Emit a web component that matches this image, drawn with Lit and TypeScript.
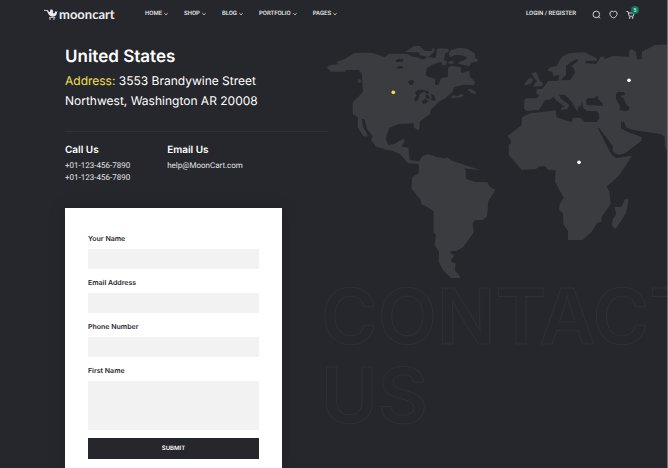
import { LitElement, html, css, svg } from "lit";
import { customElement } from "lit/decorators.js";

const MENU = ["Home", "Shop", "Blog", "Portfolio", "Pages"];

const FIELDS = [
  { id: "name", label: "Your Name", type: "text" },
  { id: "email", label: "Email Address", type: "email" },
  { id: "phone", label: "Phone Number", type: "tel" },
];

// Map pins, in the units of the map drawing
const PINS = [
  { x: 220, y: 187, kind: "pin current" },
  { x: 927, y: 151, kind: "pin" },
  { x: 777, y: 397, kind: "pin" },
];

const NORTH_AMERICA =
  "M20 112L32 105L58 102L48 96L75 87L103 69L155 68L195 82L207 71L262 71L274 79L298 83L300 87L312 88L322 81L346 84L350 72L350 58L360 55L384 58L388 64L376 68L372 90L382 96L376 106L368 106L364 95L340 103L320 115L317 135L325 141L345 146L346 165L355 165L363 145L384 140L384 115L392 107L422 112L424 130L448 122L450 140L465 155L462 166L430 164L402 172L398 185L376 205L355 217L332 240L330 252L300 274L297 301L282 293L281 280L235 283L208 293L197 325L205 345L222 343L250 326L254 332L245 350L265 353L269 388L272 391L297 394L308 378L324 373L345 380L378 386L480 420V420L297 402L264 400L240 372L216 362L203 360L168 350L153 330L158 318L140 295L134 268L126 266L129 290L143 315L140 320L130 318L113 292L114 262L98 252L98 218L129 185L125 130L115 120L78 120L75 125L32 125Z";
const ARCTIC_ISLANDS = [
  "M255 66L282 48L300 48L313 62L335 63L337 54L346 56L340 68L325 81L300 76L296 67Z",
  "M352 56L384 56L386 66L366 70L352 68Z",
  "M386 72L392 60L420 53L442 56L464 70L465 84L474 88L472 95L453 98L448 108L430 105L412 100L440 86L438 80L425 76L405 75L390 82Z",
  "M384 96L396 92L403 99L390 103Z",
  "M442 178L452 176L468 186L466 192L455 190Z",
  "M393 200L402 196L412 199L424 191L432 197L416 203L408 202L399 206Z",
  "M113 148L122 149L124 158L115 158Z",
];
const LAKES = [
  "M226 92L234 87L250 86L249 94L238 96L228 96Z",
  "M228 113L238 108L250 109L249 115L236 117Z",
  "M264 155L274 149L282 153L279 163L270 165L266 160Z",
  "M285 187L296 179L312 179L316 184L304 188L298 195L296 207L286 216L283 208L290 196Z",
  "M314 184L324 182L328 190L318 191Z",
  "M306 212L316 207L325 212L320 220L308 222Z",
  "M316 194L324 194L330 203L326 207L317 204Z",
  "M332 193L342 194L346 206L346 213L330 209L336 204Z",
  "M402 174L414 170L420 177L406 180Z",
  "M424 170L444 168L446 178L436 176L428 180Z",
];
const SOUTH_AMERICA =
  "M56 36L81 13L105 18L114 29L137 28L139 22L150 27L165 50L191 51L197 64L198 86L226 96L262 97L270 111L285 119L283 126L265 153L261 200L247 210L224 211L217 222L222 246L189 292L170 302L152 304L150 309L162 315L160 322L152 330L156 337L167 340L165 362L180 378L179 384L154 384L131 363L116 336L117 305L104 285L108 254L101 248L101 184L77 168L65 164L62 149L34 116L37 82L57 68Z";
const OLD_WORLD =
  "M103 210L108 205L140 205L148 197L139 190L140 178L157 176L175 153L205 152L208 135L190 138L187 125L173 122L178 113L200 107L215 82L235 70L285 67L322 86L320 92L286 93L286 100L318 102L333 80L342 80L343 88L368 78L418 80L417 62L425 57L438 66L441 88L455 87L456 65L495 45L540 43L540 362L530 360L525 350L524 320L512 312L430 300L410 293L402 276L393 275L393 295L415 307L456 322L454 333L405 370L385 374L370 367L368 348L327 293L323 294L365 375L378 384L426 377L388 435L350 470L358 485L362 522L335 560L335 575L322 578L305 605L278 630L234 630L234 603L220 583L219 550L207 540L208 525L221 503L195 455L197 421L175 419L165 409L148 409L138 417L95 420L57 376L56 345L63 340L62 330L53 318L95 285L96 262L120 250L150 247L197 241L200 262L245 277L248 264L270 263L285 276L320 276L328 265L326 248L318 243L292 243L280 235L276 215L272 230L266 228L261 243L245 215L225 195L207 194L212 205L238 225L232 238L215 240L212 234L224 230L195 208L190 200L183 208L165 210L147 240L110 243L102 235Z";
const OLD_WORLD_ISLANDS = [
  "M103 162L118 143L130 148L124 160L107 166Z",
  "M124 130L138 126L144 138L150 154L160 160L156 168L130 170L134 160L142 154L132 144Z",
  "M373 531L394 531L404 508L416 508L408 550L377 597L366 588L367 570L379 552Z",
];
const SEAS = [
  "M214 151L216 146L228 135L228 108L240 98L262 86L264 93L244 108L250 112L255 128L240 150Z",
  "M290 226L288 210L296 204L316 204L318 198L324 199L325 208L338 220L338 228L312 226Z",
  "M378 192L384 186L402 186L406 195L390 197L402 206L408 222L418 232L418 240L406 244L388 239L390 228L378 208Z",
];

@customElement("world-map")
export class WorldMap extends LitElement {
  static styles = css`
    :host {
      display: block;
    }
    .map {
      display: block;
      width: 100%;
      height: auto;
    }
    .land {
      fill: #3b3c40;
    }
    .water {
      fill: #26272c;
    }
    .pin {
      fill: #fff;
    }
    .current {
      fill: #f3e04f;
    }
  `;

  render() {
    return html`
      <svg class="map" viewBox="-6 30 1047 720" role="img" aria-label="World map">
        <path class="land" d=${NORTH_AMERICA} />
        ${ARCTIC_ISLANDS.map((d) => svg`<path class="land" d=${d} />`)}
        ${LAKES.map((d) => svg`<path class="water" d=${d} />`)}
        <path class="land" transform="translate(240 360)" d=${SOUTH_AMERICA} />
        <g transform="translate(510 0)">
          <path class="land" d=${OLD_WORLD} />
          ${OLD_WORLD_ISLANDS.map((d) => svg`<path class="land" d=${d} />`)}
          ${SEAS.map((d) => svg`<path class="water" d=${d} />`)}
        </g>
        ${PINS.map((p) => svg`<circle class=${p.kind} cx=${p.x} cy=${p.y} r="5.5" />`)}
      </svg>
    `;
  }
}

@customElement("app-root")
export class AppRoot extends LitElement {
  static styles = css`
    :host {
      display: flex;
      flex-direction: column;
      box-sizing: border-box;
      min-height: 100vh;
      overflow: hidden;
      background: #26272c;
      border-right: 1px solid #707175;
      color: #fff;
      font-family: Inter, "Open Sans", sans-serif;
      text-rendering: geometricPrecision;
    }
    a {
      color: inherit;
      text-decoration: none;
    }
    .header {
      display: flex;
      align-items: center;
      height: 28px;
      padding: 0 32px 0 44px;
      font: 500 6px/12px Roboto, sans-serif;
      color: #ececee;
    }
    .logo {
      display: flex;
      align-items: center;
      gap: 1px;
      width: 101px;
      font: 700 13px/16px Lato, sans-serif;
    }
    .cart-mark {
      width: 14px;
      height: 12px;
    }
    .menu {
      display: flex;
      gap: 16px;
      flex: 1;
    }
    .menu-link {
      display: flex;
      align-items: center;
      gap: 2px;
      text-transform: uppercase;
    }
    .chevron {
      width: 4px;
      height: 4px;
    }
    .login {
      text-transform: uppercase;
    }
    .tools {
      display: flex;
      gap: 8px;
      margin-left: 16px;
    }
    .tool {
      position: relative;
      display: block;
      padding: 0;
      border: 0;
      background: none;
      color: inherit;
      width: 9px;
      height: 9px;
    }
    .tool-icon {
      display: block;
      width: 9px;
      height: 9px;
    }
    .badge {
      position: absolute;
      top: -4px;
      right: -4px;
      width: 8px;
      height: 8px;
      border-radius: 50%;
      background: #0d775e;
      font: 500 5px/8px Roboto, sans-serif;
      text-align: center;
    }
    .hero {
      flex: 1;
      display: grid;
      grid-template-columns: 253px minmax(0, 1fr);
      padding-left: 65px;
    }
    .info {
      position: relative;
      z-index: 1;
      grid-area: 1 / 1;
      display: flex;
      flex-direction: column;
      width: 263px;
      padding-top: 19px;
    }
    .country {
      margin: 0 0 4px;
      font-size: 17px;
      line-height: 20px;
      font-weight: 600;
    }
    .address {
      margin: 0;
      padding-bottom: 20px;
      border-bottom: 1px solid #313237;
      font-size: 12px;
      line-height: 20px;
    }
    .address-key {
      color: #f3e04f;
    }
    .contacts {
      display: flex;
      gap: 37px;
      padding: 12px 0 24px;
    }
    .contact-title {
      margin: 0 0 4px;
      font-size: 10px;
      line-height: 12px;
      font-weight: 600;
    }
    .contact-line {
      display: block;
      font: 400 8px/12px Roboto, sans-serif;
      color: #e2e2e4;
    }
    .form {
      flex: 1;
      display: flex;
      flex-direction: column;
      box-sizing: border-box;
      width: 217px;
      padding: 26px 23px 10px;
      background: #fff;
      box-shadow: 0 0 16px rgba(0, 0, 0, 0.15);
    }
    .label {
      margin-bottom: 5px;
      color: #26272c;
      font-size: 7px;
      line-height: 10px;
      font-weight: 600;
    }
    .field {
      box-sizing: border-box;
      width: 100%;
      height: 20px;
      margin: 0 0 9px;
      padding: 4px 8px;
      border: 0;
      border-radius: 0;
      outline: 0;
      resize: none;
      background: #f2f2f2;
      color: #26272c;
      font: 400 8px/12px Roboto, sans-serif;
    }
    .message {
      height: 49px;
      margin-bottom: 8px;
    }
    .submit {
      height: 21px;
      padding: 0;
      border: 0;
      background: #26272c;
      color: #fff;
      font: 600 6px/12px Inter, sans-serif;
      text-transform: uppercase;
      text-rendering: inherit;
    }
    .stage {
      grid-area: 1 / 2;
      overflow: hidden;
      padding-top: 12px;
    }
    .headline {
      margin: -3px 0 0;
      padding-left: 3px;
      font-size: 77px;
      line-height: 79px;
      font-weight: 600;
      color: #26272c;
      -webkit-text-stroke: 1px #2f3034;
      text-transform: uppercase;
    }
  `;

  render() {
    return html`
      <header class="header">
        <a class="logo" href="#">
          <svg class="cart-mark" viewBox="0 0 42 36" fill="currentColor" aria-hidden="true">
            <path d="M0 5L12 7L15 12L10 11L7 8L0 8Z" />
            <path d="M10 11L17 12L20 4L25 5L28 10L26 13L30 17L36 8L37 12L40 9L38 18Q35 26 25 26Q15 25 10 11Z" />
            <path d="M15 27H34V29H15Z" />
            <circle cx="18" cy="33" r="2.5" />
            <circle cx="30" cy="33" r="2.5" />
          </svg>
          <span>mooncart</span>
        </a>
        <nav class="menu">
          ${MENU.map(
            (item) => html`
              <a class="menu-link" href="#"
                >${item}<svg class="chevron" viewBox="0 0 4 4" fill="none" stroke="currentColor" stroke-width=".8" aria-hidden="true">
                  <path d="M.4 1.3L2 2.8L3.6 1.3" /></svg
              ></a>
            `
          )}
        </nav>
        <a class="login" href="#">Login / Register</a>
        <div class="tools">
          <button class="tool" aria-label="Search">
            <svg class="tool-icon" viewBox="0 0 18 18" fill="none" stroke="currentColor" stroke-width="1.7">
              <circle cx="8.6" cy="8.8" r="6.6" />
              <path d="M12.5 13L16 16.5" />
            </svg>
          </button>
          <button class="tool" aria-label="Wishlist">
            <svg class="tool-icon" viewBox="0 0 18 18" fill="none" stroke="currentColor" stroke-width="1.7">
              <path d="M9 3.8C7.5 2 4.2 2 2.8 4C1.2 6.5 2 10.8 4.2 13C6 14.8 7.4 15.6 9 15.6C10.6 15.6 12 14.8 13.8 13C16 10.8 16.8 6.5 15.2 4C13.8 2 10.5 2 9 3.8Z" />
            </svg>
          </button>
          <button class="tool" aria-label="Cart">
            <svg class="tool-icon" viewBox="0 0 18 18" fill="none" stroke="currentColor" stroke-width="1.7">
              <path d="M1 3H4L6.4 12.4H14.5L16.5 6H5" />
              <circle cx="7.4" cy="15.8" r="1" />
              <circle cx="13.4" cy="15.8" r="1" />
            </svg>
            <span class="badge">5</span>
          </button>
        </div>
      </header>
      <main class="hero">
        <div class="stage">
          <world-map></world-map>
          <h1 class="headline">Contact<br />us</h1>
        </div>
        <section class="info">
          <h2 class="country">United States</h2>
          <p class="address">
            <span class="address-key">Address:</span> 3553 Brandywine Street<br />Northwest, Washington AR 20008
          </p>
          <div class="contacts">
            <div>
              <h3 class="contact-title">Call Us</h3>
              <a class="contact-line" href="tel:+011234567890">+01-123-456-7890</a>
              <a class="contact-line" href="tel:+011234567890">+01-123-456-7890</a>
            </div>
            <div>
              <h3 class="contact-title">Email Us</h3>
              <a class="contact-line" href="mailto:help@MoonCart.com">help@MoonCart.com</a>
            </div>
          </div>
          <form class="form" @submit=${(e: Event) => e.preventDefault()}>
            ${FIELDS.map(
              (f) => html`
                <label class="label" for=${f.id}>${f.label}</label>
                <input class="field" id=${f.id} type=${f.type} />
              `
            )}
            <label class="label" for="message">First Name</label>
            <textarea class="field message" id="message"></textarea>
            <button class="submit" type="submit">Submit</button>
          </form>
        </section>
      </main>
    `;
  }
}
